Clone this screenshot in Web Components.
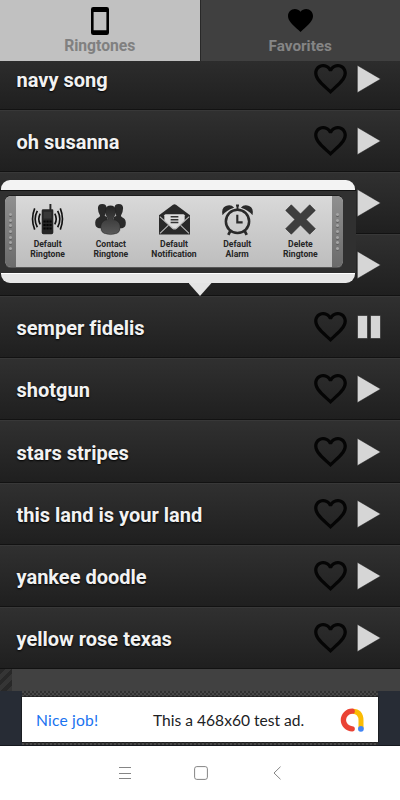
<!DOCTYPE html>
<html lang="en">
<head>
<meta charset="utf-8">
<title>Ringtones</title>
<style>
  html, body { margin: 0; height: 100%; }
  body { font-family: Roboto, sans-serif; font-variant-ligatures: none; background: #1e1e1e; overflow: hidden; }
</style>
</head>
<body>
<ringtone-app></ringtone-app>

<script>
/**
 * Icon shapes, keyed by name
 */
const ICONS = {
  phone: `<svg viewBox="0 0 18 28"><path fill="#000" fill-rule="evenodd" d="M2.3 0h13.4A2.3 2.3 0 0 1 18 2.3v23.4a2.3 2.3 0 0 1-2.3 2.3H2.3A2.3 2.3 0 0 1 0 25.7V2.3A2.3 2.3 0 0 1 2.3 0zM2.6 5v18.200h12.800V5z"/></svg>`,
  heart: `<svg viewBox="2 3 20 18.350"><path fill="#000" d="M12 21.350l-1.450-1.320C5.400 15.360 2 12.280 2 8.500 2 5.420 4.420 3 7.500 3c1.740 0 3.410.81 4.500 2.090C13.090 3.810 14.760 3 16.500 3 19.580 3 22 5.420 22 8.500c0 3.780-3.400 6.860-8.550 11.540L12 21.350z"/></svg>`,
  outline: `<svg viewBox="2 3 20 18.350"><path fill="#050505" d="M16.500 3c-1.740 0-3.410.81-4.500 2.090C10.910 3.810 9.240 3 7.500 3 4.420 3 2 5.420 2 8.500c0 3.780 3.400 6.860 8.550 11.540L12 21.350l1.450-1.320C18.600 15.360 22 12.280 22 8.500 22 5.420 19.580 3 16.500 3zm-4.400 15.550l-.1.100-.1-.1C7.140 14.240 4 11.390 4 8.500 4 6.500 5.500 5 7.500 5c1.540 0 3.040.99 3.570 2.360h1.870C13.460 5.990 14.960 5 16.500 5c2 0 3.500 1.500 3.500 3.500 0 2.890-3.140 5.740-7.900 10.050z"/></svg>`,
  play: `<svg viewBox="0 0 24 28"><path fill="#d6d6d6" stroke="#111" stroke-width=".5" d="M.3.3 23.700 14 .3 27.700z"/></svg>`,
  pause: `<svg viewBox="0 0 24 28"><path fill="#d6d6d6" stroke="#111" stroke-width=".5" d="M.5 2.500h10v23H.5zM13.500 2.500h10v23h-10z"/></svg>`,
  ringer: `<svg viewBox="0 0 32 32"><path fill="#262626" d="M18 0h2v6h-2zM11.500 5.500h9.500q1 0 1 1.200v22.800q0 1.800-1.800 1.800h-8.400q-1.800 0-1.800-1.800V7q0-1.500 1.500-1.500z"/><path fill="#383838" d="M12 8h8v7h-8z"/><path fill="#050505" d="M11.800 17h2.300v2.200h-2.300zM14.900 17h2.300v2.200h-2.300zM18 17h2.300v2.200H18zM11.800 20.600h2.300v2.200h-2.300zM14.900 20.600h2.300v2.200h-2.300zM18 20.600h2.300v2.200H18zM11.800 24.200h2.300v2.200h-2.300zM14.900 24.200h2.300v2.200h-2.300zM18 24.200h2.300v2.200H18z"/><path fill="none" stroke="#111" stroke-width="1.700" d="M8.500 10q-3 5.500 0 11M5.500 7q-4.500 8.500 0 17M2.800 4.500q-4.500 11 0 22M23.500 10q3 5.500 0 11M26.500 7q4.500 8.500 0 17M29.200 4.500q4.500 11 0 22"/></svg>`,
  people: `<svg viewBox="0 0 32 32"><defs><linearGradient id="g" x2="0" y2="1"><stop stop-color="#242424"/><stop offset="1" stop-color="#5a5a5a"/></linearGradient></defs><g fill="#2a2a2a"><path d="M3 4.500Q3 0 7.500 0T12 4.500q0 4.500-2 7.500l3 2v11H4Q0 24 .2 19q.3-4 4.300-5.500l.8-1.500Q3 8.500 3 4.500zM29 4.500Q29 0 24.500 0T20 4.500q0 4.500 2 7.500l-3 2v11h9q4-1 3.800-6-.3-4-4.300-5.500l-.8-1.500Q29 8.500 29 4.500z"/></g><path fill="url(#g)" stroke="#1b1b1b" stroke-width=".4" d="M10.700 7.500Q10.500 1.800 16 1.800t5.300 5.700q0 4.500-2.600 7.500v1q6.700 1 7.300 7 .4 5.500-3 7.200-7 2.800-14 0-3.400-1.700-3-7.200.6-6 7.300-7v-1q-2.600-3-2.600-7.500z"/></svg>`,
  mail: `<svg viewBox="0 0 32 32"><path fill="#292929" d="M0 11.500 14.500.7q1.500-1 3 0L32 11.500V31.500H0z"/><path fill="#ddd" d="M5.500 11.500Q6 10.500 7 10.500h18q1 0 1.500 1v6L18 25q-2 1.300-4 0l-8.500-7.500z"/><path fill="none" stroke="#bbb" stroke-width="1.100" d="M.8 13 14 25q2 1.500 4 0l13.200-12M1 30.300 9.600 22M31 30.300 22.400 22"/><path stroke="#333" stroke-width="1.500" d="M12 13.200h8M12 16.200h8M12 19.200h8"/></svg>`,
  alarm: `<svg viewBox="0 0 32 32"><g fill="none" stroke="#292929"><circle cx="16" cy="18" r="12" stroke-width="2.600"/><path stroke-width="2.200" d="M15.800 11v8h5.500"/><path stroke-width="2.800" d="m8.500 28-2 3.800M23.500 28l2 3.800"/><path stroke-width="2" d="M16 1v5"/></g><path fill="#292929" d="M14.500.5h3v2h-3zM.5 11.500Q-1 4 4 2q5.500-2 8.500 1.800Q5 6 .5 11.500zM31.500 11.500Q33 4 28 2q-5.500-2-8.500 1.800 7.500 2.200 12 7.700z"/></svg>`,
  remove: `<svg viewBox="0 0 32 32"><path fill="#3e3e3e" stroke="#262626" stroke-width=".6" stroke-linejoin="round" d="M6.500.8 16 10.300 25.500.8l5.800 5.800L21.800 16l9.500 9.500-5.800 5.700L16 21.700l-9.500 9.500-5.800-5.700 9.500-9.500L.7 6.600z"/></svg>`,
  admob: `<svg viewBox="0 0 24 24"><path fill="none" stroke="#fbbc04" stroke-width="5" d="M12.500 3.300q8.500.2 8.500 9.200v8"/><path fill="none" stroke="#ea4335" stroke-width="5.300" stroke-linecap="round" d="M12.200 3.200a8.800 8.800 0 1 0 0 17.600"/><circle cx="20.900" cy="20.800" r="2.900" fill="#4285f4"/></svg>`,
  menu: `<svg viewBox="0 0 14 14"><path stroke="#858585" fill="none" d="M1 1.500h12M1 7.500h12M1 12.500h12"/></svg>`,
  home: `<svg viewBox="0 0 14 14"><rect x=".6" y=".6" width="12.800" height="12.800" rx="2.200" stroke="#858585" fill="none"/></svg>`,
  back: `<svg viewBox="0 0 14 14"><path stroke="#858585" fill="none" d="M10.500.7 4 7l6.500 6.300"/></svg>`
};

/**
 * AppIcon Component
 */
class AppIcon extends HTMLElement {
  constructor() {
    super();
    this.attachShadow({ mode: 'open' });
  }

  connectedCallback() {
    this.shadowRoot.innerHTML = `
      <style>
        :host { display: block; flex: none; }
        svg { display: block; width: 100%; height: 100%; overflow: visible; }
      </style>
      ${ICONS[this.getAttribute('name')] || ''}
    `;
  }
}

/**
 * TabItem Component
 */
class TabItem extends HTMLElement {
  constructor() {
    super();
    this.attachShadow({ mode: 'open' });
    this.shadowRoot.innerHTML = `
      <style>
        :host {
          flex: 1;
          display: flex;
          flex-direction: column;
          align-items: center;
          box-sizing: border-box;
          height: 61px;
          background: #404040;
          color: #858585;
          border-left: 1px solid #282828;
          font-size: 15.300px;
          font-weight: 700;
          line-height: 18px;
        }
        :host([selected]) { background: #c1c1c1; color: #808080; border: 0; font-size: 15.700px; }
        .icon { height: 37px; display: flex; align-items: center; }
      </style>
      <div class="icon"><slot name="icon"></slot></div>
      <slot></slot>
    `;
  }
}

/**
 * RingtoneRow Component
 */
class RingtoneRow extends HTMLElement {
  constructor() {
    super();
    this.attachShadow({ mode: 'open' });
  }

  connectedCallback() {
    const playing = this.hasAttribute('playing');
    this.shadowRoot.innerHTML = `
      <style>
        :host {
          display: flex;
          flex: none;
          align-items: center;
          box-sizing: border-box;
          height: 62.150px;
          padding: 0 19px 0 16.500px;
          border-top: 1px solid #383838;
          border-bottom: 1px solid #121212;
          background: linear-gradient(#303030, #1f1f1f);
          color: #f2f2f2;
          font-size: 20px;
          font-weight: 700;
          text-shadow: 0 1px 2px #000;
        }
        .title { flex: 1; padding-top: 2px; white-space: nowrap; }
        .heart { width: 33px; height: 30px; margin-right: 10px; }
        .state { width: 24px; height: 28px; }
      </style>
      <span class="title"><slot></slot></span>
      <app-icon class="heart" name="outline"></app-icon>
      <app-icon class="state" name="${playing ? 'pause' : 'play'}"></app-icon>
    `;
  }
}

/**
 * QuickAction Component
 */
class QuickAction extends HTMLElement {
  constructor() {
    super();
    this.attachShadow({ mode: 'open' });
  }

  connectedCallback() {
    this.shadowRoot.innerHTML = `
      <style>
        :host {
          display: flex;
          flex: 1 1 0;
          min-width: 0;
          flex-direction: column;
          align-items: center;
          padding-top: 7.500px;
          color: #262626;
          font-size: 8.600px;
          font-weight: 700;
          line-height: 10.600px;
          text-align: center;
        }
        app-icon { width: 31px; height: 31px; margin-bottom: 4px; }
      </style>
      <app-icon name="${this.getAttribute('icon')}"></app-icon>
      <slot></slot>
    `;
  }
}

/**
 * QuickActions Component, the popup that lies over the list
 */
class QuickActions extends HTMLElement {
  constructor() {
    super();
    this.attachShadow({ mode: 'open' });
    this.shadowRoot.innerHTML = `
      <style>
        :host { display: block; width: 356px; }
        .edge {
          box-sizing: border-box;
          height: 10px;
          margin: 0 1px;
          background: #f3f3f3;
          border-radius: 9px 9px 0 0;
        }
        .edge.bottom { background: #e7e7e7; border-top: 1px solid #fff; border-radius: 0 0 9px 9px; }
        .track { background: #303030; height: 83px; padding: 4px 12px 5px 4px; box-sizing: border-box; border-top: 1px solid #111; }
        .panel {
          display: flex;
          height: 73px;
          box-sizing: border-box;
          border: 1px solid #555;
          border-color: #1c1c1c #303030 #555;
          border-radius: 7px;
          overflow: hidden;
          background: linear-gradient(#d9d9d9, #bdbdbd);
        }
        .grip {
          width: 11px;
          flex: none;
          display: flex;
          flex-direction: column;
          align-items: center;
          justify-content: center;
          gap: 2.600px;
          background: linear-gradient(#909090, #6b6b6b);
        }
        .grip i { width: 3px; height: 3px; border-radius: 50%; background: #a5a5a5; box-shadow: 0 1px 0 #606060; }
        .arrow { display: block; width: 23px; height: 13px; margin-left: 188.500px; background: #e4e4e4; clip-path: polygon(0 0, 100% 0, 50% 100%); }
      </style>
      <div class="edge"></div>
      <div class="track">
        <div class="panel">
          <div class="grip">${'<i></i>'.repeat(7)}</div>
          <slot></slot>
          <div class="grip">${'<i></i>'.repeat(7)}</div>
        </div>
      </div>
      <div class="edge bottom"></div>
      <span class="arrow"></span>
    `;
  }
}

/**
 * AdBanner Component
 */
class AdBanner extends HTMLElement {
  constructor() {
    super();
    this.attachShadow({ mode: 'open' });
    this.shadowRoot.innerHTML = `
      <style>
        :host { display: flex; height: 55px; padding: 0 22px; box-sizing: border-box; background: #272c35; border-bottom: 1px solid #15181e; }
        .frame { flex: 1; padding: 6px 0 3px; background: repeating-conic-gradient(#303030 0 25%, #484848 0 50%) 0 0 / 4px 4px; }
        .ad {
          display: flex;
          align-items: center;
          height: 45px;
          box-sizing: border-box;
          padding: 0 14px;
          background: #fff;
          color: #202124;
          font-family: Lato, sans-serif;
          font-size: 15.600px;
          box-shadow: 0 0 0 .5px #111;
        }
        .lead { width: 117px; color: #1a73f0; letter-spacing: .2px; }
        .copy { flex: 1; white-space: nowrap; }
        app-icon { width: 24px; height: 24px; }
      </style>
      <div class="frame">
        <div class="ad">
          <span class="lead"><slot name="lead"></slot></span>
          <span class="copy"><slot></slot></span>
          <app-icon name="admob"></app-icon>
        </div>
      </div>
    `;
  }
}

/**
 * SystemNav Component
 */
class SystemNav extends HTMLElement {
  constructor() {
    super();
    this.attachShadow({ mode: 'open' });
    this.shadowRoot.innerHTML = `
      <style>
        :host { display: flex; height: 54px; align-items: center; justify-content: center; gap: 62px; padding-left: 2px; background: #fff; }
        app-icon { width: 14px; height: 14px; }
      </style>
      <app-icon name="menu"></app-icon>
      <app-icon name="home"></app-icon>
      <app-icon name="back"></app-icon>
    `;
  }
}

/**
 * RingtoneApp Component
 */
class RingtoneApp extends HTMLElement {
  constructor() {
    super();
    this.attachShadow({ mode: 'open' });
    this.shadowRoot.innerHTML = `
      <style>
        :host { display: flex; flex-direction: column; position: relative; width: 400px; height: 800px; overflow: hidden; }
        .tabs { display: flex; height: 61px; }
        .phone { width: 18px; height: 28px; margin-top: 4px; }
        .heart { width: 25px; height: 23px; margin-top: 4px; }
        .list { display: flex; flex-direction: column; justify-content: flex-end; height: 608px; overflow: hidden; }
        .gap { display: flex; height: 22px; background: #414141; }
        .gap::before { content: ""; width: 12px; background: repeating-linear-gradient(135deg, #282828 0 4px, #353535 4px 8px); }
        quick-actions { position: absolute; left: 0; top: 180px; }
      </style>
      <div class="tabs">
        <tab-item selected><app-icon class="phone" slot="icon" name="phone"></app-icon>Ringtones</tab-item>
        <tab-item><app-icon class="heart" slot="icon" name="heart"></app-icon>Favorites</tab-item>
      </div>
      <div class="list">
        <ringtone-row>navy song</ringtone-row>
        <ringtone-row>oh susanna</ringtone-row>
        <ringtone-row></ringtone-row>
        <ringtone-row></ringtone-row>
        <ringtone-row playing>semper fidelis</ringtone-row>
        <ringtone-row>shotgun</ringtone-row>
        <ringtone-row>stars stripes</ringtone-row>
        <ringtone-row>this land is your land</ringtone-row>
        <ringtone-row>yankee doodle</ringtone-row>
        <ringtone-row>yellow rose texas</ringtone-row>
      </div>
      <div class="gap"></div>
      <ad-banner><span slot="lead">Nice job!</span>This a 468x60 test ad.</ad-banner>
      <system-nav></system-nav>
      <quick-actions>
        <quick-action icon="ringer">Default<br>Ringtone</quick-action>
        <quick-action icon="people">Contact<br>Ringtone</quick-action>
        <quick-action icon="mail">Default<br>Notification</quick-action>
        <quick-action icon="alarm">Default<br>Alarm</quick-action>
        <quick-action icon="remove">Delete<br>Ringtone</quick-action>
      </quick-actions>
    `;
  }
}

customElements.define('app-icon', AppIcon);
customElements.define('tab-item', TabItem);
customElements.define('ringtone-row', RingtoneRow);
customElements.define('quick-action', QuickAction);
customElements.define('quick-actions', QuickActions);
customElements.define('ad-banner', AdBanner);
customElements.define('system-nav', SystemNav);
customElements.define('ringtone-app', RingtoneApp);
</script>
</body>
</html>
